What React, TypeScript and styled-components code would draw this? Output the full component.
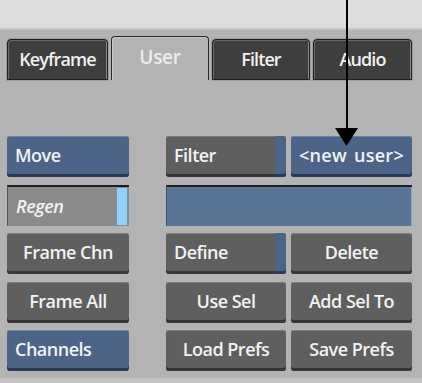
import React from "react";
import styled, { createGlobalStyle, css } from "styled-components";

const GlobalStyle = createGlobalStyle`
  html, body { margin: 0; padding: 0; background: #b3b3b3; }
  body { font-family: "Open Sans", Lato, sans-serif; }
`;

const Page = styled.div`
  position: relative;
  width: 422px;
  height: 383px;
  overflow: hidden;
  background: #b3b3b3;
  display: flex;
  flex-direction: column;
`;

const TopBar = styled.div`
  height: 28px;
  background: #dddddd;
  border-bottom: 2px solid #c6c6c6;
  flex: none;
`;

const TabRow = styled.div`
  display: flex;
  align-items: flex-end;
  height: 44px;
  padding: 6px 0 0 7px;
  gap: 3px;
  flex: none;
`;

const Tab = styled.div<{ $w: number; $active?: boolean }>`
  width: ${(p) => p.$w}px;
  box-sizing: border-box;
  display: flex;
  align-items: center;
  justify-content: center;
  font-weight: 600;
  border-radius: 4px 4px 0 0;
  ${(p) =>
    p.$active
      ? css`
          height: 44px;
          background: #b3b3b3;
          color: #ededed;
          font-size: 19px;
          letter-spacing: -0.3px;
          border: 1px solid #2a2a2a;
          border-bottom: none;
          box-shadow: inset 1px 1px 0 #c9c9c9;
          padding-bottom: 3px;
        `
      : css`
          height: 41px;
          background: #3e3e3e;
          color: #f0f0f0;
          font-size: 18px;
          letter-spacing: -0.9px;
          padding-bottom: 2px;
          border: 1px solid #1e1e1e;
          box-shadow: inset 1px 1px 0 #6a6a6a, inset -1px 0 0 #8a8a8a,
            0 0 0 1px #9c9c9c;
        `}
`;

const Content = styled.div`
  display: flex;
  padding: 56px 0 0 7px;
`;

const LeftCol = styled.div`
  width: 122px;
  display: grid;
  grid-template-rows: repeat(5, 41px);
  row-gap: 7.5px;
  margin-right: 37px;
`;

const RightGrid = styled.div`
  display: grid;
  grid-template-columns: 120px 121px;
  grid-template-rows: repeat(5, 41px);
  column-gap: 5px;
  row-gap: 7.5px;
`;

const Btn = styled.div<{ $blue?: boolean; $left?: boolean; $strip?: boolean }>`
  position: relative;
  box-sizing: border-box;
  height: 41px;
  border-radius: 3px;
  display: flex;
  align-items: center;
  justify-content: ${(p) => (p.$left ? "flex-start" : "center")};
  padding: ${(p) => (p.$left ? "0 0 3px 8px" : "0 0 3px 0")};
  font-size: 18px;
  font-weight: 600;
  letter-spacing: -0.5px;
  color: #f2f2f2;
  white-space: nowrap;
  background: ${(p) => (p.$blue ? "#4b6488" : "#5f5f5f")};
  box-shadow: ${(p) =>
    p.$blue
      ? "inset 0 1px 0 #6b83a5, inset 0 -3px 0 #2b3a52"
      : "inset 0 1px 0 #7c7c7c, inset 0 -3px 0 #363636"};
  ${(p) =>
    p.$strip &&
    css`
      &::after {
        content: "";
        position: absolute;
        right: 0;
        top: 0;
        bottom: 0;
        width: 11px;
        background: #4b6488;
        border-radius: 0 3px 3px 0;
        box-shadow: inset 0 -3px 0 #2b3a52;
      }
    `}
`;

const Spaced = styled.span`
  word-spacing: 2px;
  letter-spacing: 0.3px;
`;

const RegenField = styled.div`
  position: relative;
  box-sizing: border-box;
  height: 41px;
  background: #8b8b8b;
  border-top: 2px solid #1e1e1e;
  border-left: 1px solid #555;
  display: flex;
  align-items: center;
  padding-left: 8px;
  font-size: 18px;
  font-style: italic;
  font-weight: 600;
  letter-spacing: -0.5px;
  color: #f2f2f2;
`;

const RegenStrip = styled.div`
  position: absolute;
  right: 2px;
  top: 1px;
  bottom: 1px;
  width: 10px;
  background: #8fd0ff;
`;

const NameField = styled.div`
  grid-column: 1 / span 2;
  box-sizing: border-box;
  height: 41px;
  background: #5b7597;
  border-top: 2px solid #1e1e1e;
  border-left: 1px solid #3d4f6a;
  box-shadow: inset -1px 0 0 #8ea3c0;
`;

const BottomEdge = styled.div`
  margin-top: auto;
  height: 5px;
  background: #c4c4c4;
`;

const Arrow = styled.svg`
  position: absolute;
  left: 334px;
  top: 0;
`;

export default function App() {
  return (
    <>
      <GlobalStyle />
      <Page>
        <TopBar />
        <TabRow>
          <Tab $w={101}>Keyframe</Tab>
          <Tab $w={98} $active>User</Tab>
          <Tab $w={98}>Filter</Tab>
          <Tab $w={99}>Audio</Tab>
        </TabRow>
        <Content>
          <LeftCol>
            <Btn $blue $left>Move</Btn>
            <RegenField>
              Regen
              <RegenStrip />
            </RegenField>
            <Btn>Frame Chn</Btn>
            <Btn>Frame All</Btn>
            <Btn $blue $left>Channels</Btn>
          </LeftCol>
          <RightGrid>
            <Btn $left $strip>Filter</Btn>
            <Btn $blue><Spaced>&lt;new user&gt;</Spaced></Btn>
            <NameField />
            <Btn $left $strip>Define</Btn>
            <Btn>Delete</Btn>
            <Btn>Use Sel</Btn>
            <Btn>Add Sel To</Btn>
            <Btn>Load Prefs</Btn>
            <Btn>Save Prefs</Btn>
          </RightGrid>
        </Content>
        <BottomEdge />
        <Arrow width="24" height="148" viewBox="0 0 24 148">
          <rect x="12" y="0" width="2" height="132" fill="#000" />
          <polygon points="1,128 24,128 12.5,146" fill="#000" />
        </Arrow>
      </Page>
    </>
  );
}
